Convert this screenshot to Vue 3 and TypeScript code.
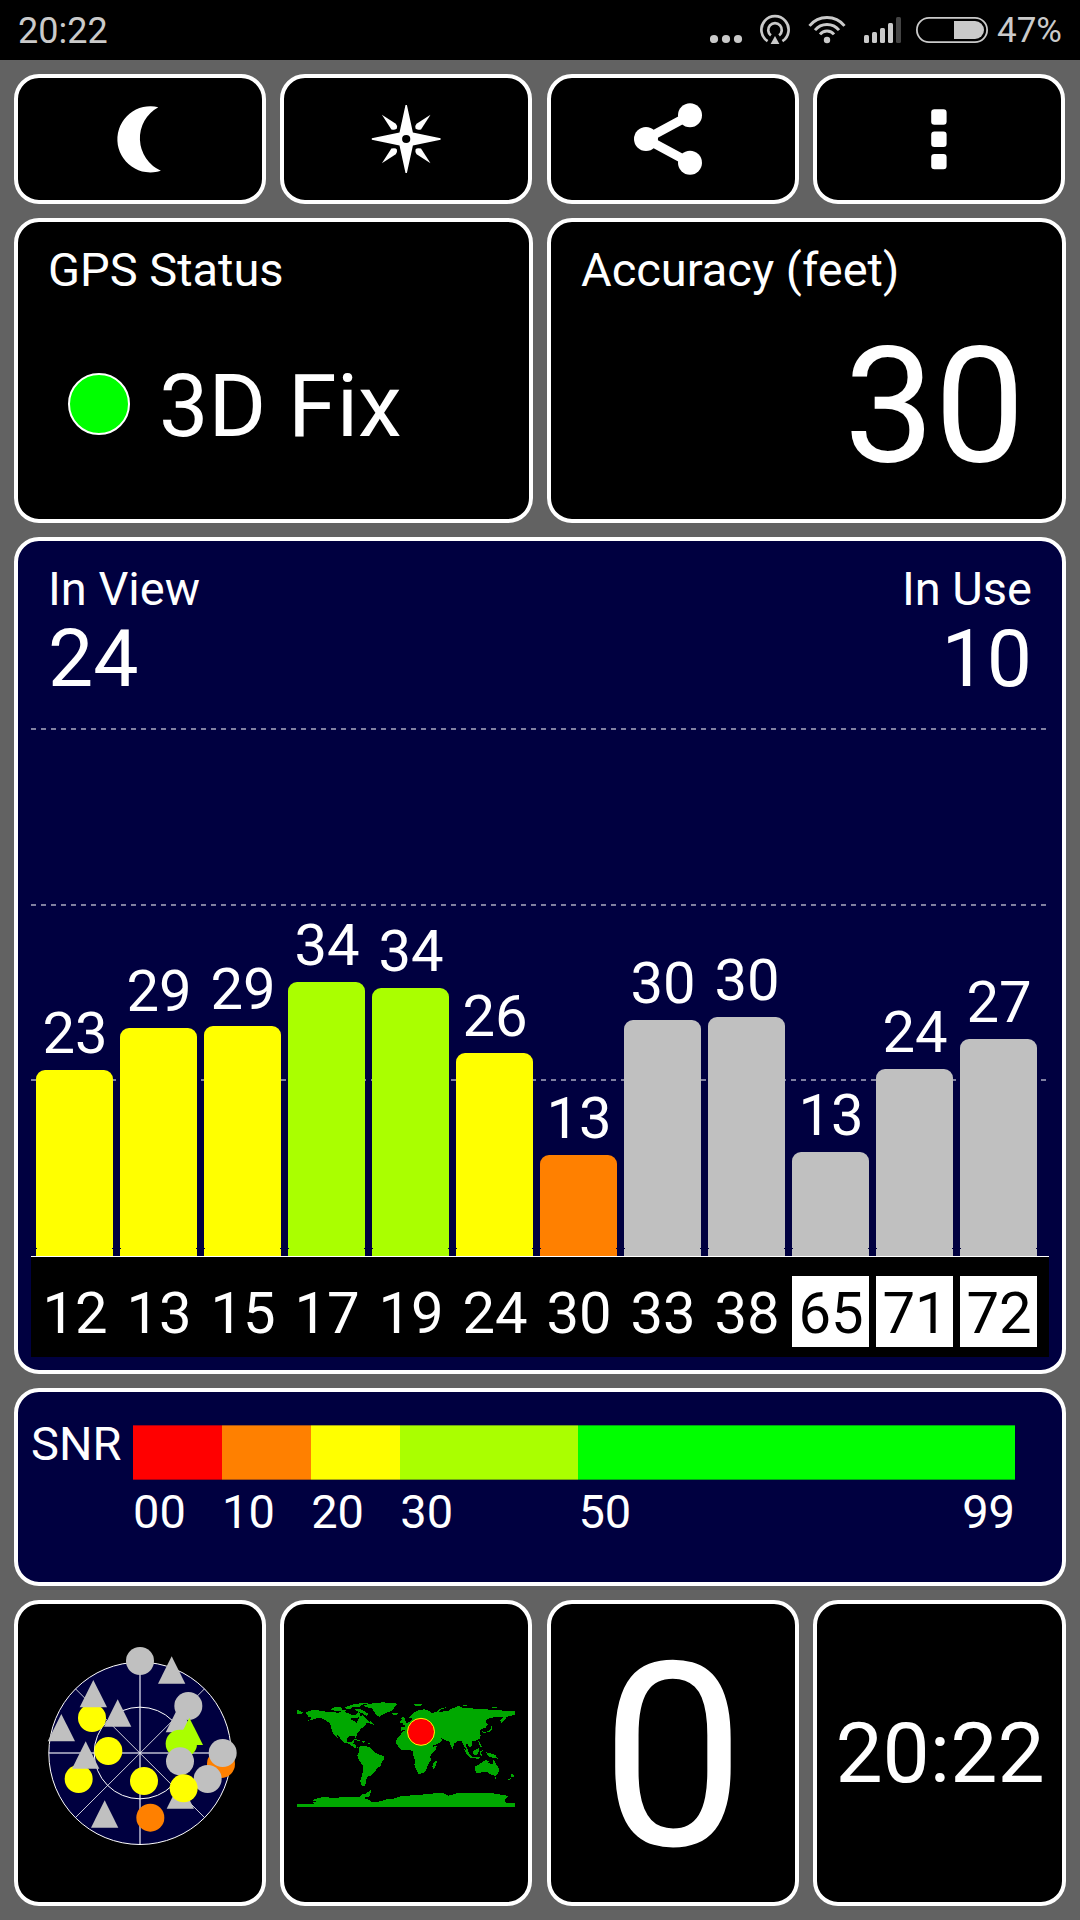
<script setup lang="ts">
interface Satellite {
  id: number
  snr: number
  height: number
  tone: string
  glonass?: boolean
}

const satellites: Satellite[] = [
  { id: 12, snr: 23, height: 186, tone: 'yellow' },
  { id: 13, snr: 29, height: 228, tone: 'yellow' },
  { id: 15, snr: 29, height: 230, tone: 'yellow' },
  { id: 17, snr: 34, height: 274, tone: 'lime' },
  { id: 19, snr: 34, height: 268, tone: 'lime' },
  { id: 24, snr: 26, height: 203, tone: 'yellow' },
  { id: 30, snr: 13, height: 101, tone: 'orange' },
  { id: 33, snr: 30, height: 236, tone: 'gray' },
  { id: 38, snr: 30, height: 239, tone: 'gray' },
  { id: 65, snr: 13, height: 104, tone: 'gray', glonass: true },
  { id: 71, snr: 24, height: 187, tone: 'gray', glonass: true },
  { id: 72, snr: 27, height: 217, tone: 'gray', glonass: true },
]

const scale = [
  { label: '00', tone: 'red' },
  { label: '10', tone: 'orange' },
  { label: '20', tone: 'yellow' },
  { label: '30', tone: 'lime' },
  { label: '50', tone: 'green' },
]

// Sky plot markers, listed in paint order. Triangles are given by their apex.
interface SkyMark {
  kind: 'c' | 't'
  x: number
  y: number
  fill: string
}

const GRAY = '#c0c0c0'
const YELLOW = '#ffff00'
const LIME = '#aaff00'
const ORANGE = '#ff8000'

const sky: SkyMark[] = [
  { kind: 'c', x: 186, y: 234, fill: YELLOW },
  { kind: 'c', x: 235, y: 333, fill: YELLOW },
  { kind: 'c', x: 146, y: 417, fill: YELLOW },
  { kind: 'c', x: 342, y: 423, fill: YELLOW },
  { kind: 'c', x: 361, y: 533, fill: ORANGE },
  { kind: 't', x: 425, y: 49, fill: GRAY },
  { kind: 't', x: 190, y: 120, fill: GRAY },
  { kind: 't', x: 263, y: 178, fill: GRAY },
  { kind: 't', x: 94, y: 222, fill: GRAY },
  { kind: 't', x: 167, y: 304, fill: GRAY },
  { kind: 't', x: 224, y: 481, fill: GRAY },
  { kind: 't', x: 451, y: 424, fill: GRAY },
  { kind: 't', x: 448, y: 195, fill: GRAY },
  { kind: 'c', x: 330, y: 63, fill: GRAY },
  { kind: 'c', x: 475, y: 198, fill: GRAY },
  { kind: 'c', x: 449, y: 311, fill: LIME },
  { kind: 'c', x: 459, y: 311, fill: LIME },
  { kind: 't', x: 478, y: 233, fill: LIME },
  { kind: 'c', x: 450, y: 364, fill: GRAY },
  { kind: 'c', x: 573, y: 372, fill: ORANGE },
  { kind: 'c', x: 578, y: 339, fill: GRAY },
  { kind: 'c', x: 533, y: 417, fill: GRAY },
  { kind: 'c', x: 461, y: 445, fill: YELLOW },
]

const triangle = (m: SkyMark): string =>
  `${m.x},${m.y} ${m.x + 41},${m.y + 82} ${m.x - 41},${m.y + 82}`
</script>

<template>
  <div class="screen">
    <header class="status">
      <span class="status-time">20:22</span>
      <svg class="status-icons" width="280" height="60" viewBox="710 0 280 60">
        <g fill="#cacaca">
          <circle cx="714" cy="39" r="4.1" />
          <circle cx="726" cy="39" r="4.1" />
          <circle cx="738" cy="39" r="4.1" />
          <path d="M775 36 L779.4 44 H770.6 Z" />
          <circle cx="827" cy="40" r="3.2" />
          <rect x="864" y="35" width="5" height="8" rx="1.5" />
          <rect x="872" y="32" width="5" height="11" rx="1.5" />
          <rect x="880" y="28" width="5" height="15" rx="1.5" />
          <rect x="888" y="23" width="5" height="20" rx="1.5" />
          <path d="M954 21 H975 A9 9 0 0 1 975 39 H954 Z" />
        </g>
        <rect x="896" y="17" width="5" height="26" rx="1.5" fill="#444" />
        <g fill="none" stroke="#cacaca">
          <path d="M767.6 41.2 A13.6 13.6 0 1 1 782.4 41.2" stroke-width="2.7" />
          <path d="M770.9 35.4 A6.8 6.8 0 1 1 779.1 35.4" stroke-width="2.7" />
          <path d="M809.5 25.8 A22.5 22.5 0 0 1 844.5 25.8" stroke-width="2.9" />
          <path d="M815 30.2 A15.5 15.5 0 0 1 839 30.2" stroke-width="2.9" />
          <path d="M820 34.4 A9 9 0 0 1 834 34.4" stroke-width="2.9" />
          <rect x="916.9" y="17.9" width="70.2" height="24.2" rx="12.1" stroke-width="1.8" />
        </g>
      </svg>
      <span class="status-battery">47%</span>
    </header>

    <main class="grid">
      <div class="row tools">
        <div class="pair">
          <button class="panel tool" aria-label="Night mode">
            <svg width="244" height="122" viewBox="18 78 244 122">
              <path d="M158.3 107.2 A33 33.1 0 1 0 160.9 170.7 A35.5 35.5 0 0 1 158.3 107.2 Z" fill="#fff" />
            </svg>
          </button>
          <button class="panel tool" aria-label="Compass">
            <svg width="244" height="122" viewBox="284 78 244 122">
              <g transform="translate(406.2 139)" fill="#fff">
                <path
                  fill-rule="evenodd"
                  d="M-.7 -34 H.7 L6.7 -6.4 L34.4 -.7 V.7 L6.7 6.4 L.7 34 H-.7 L-6.7 6.4 L-34.4 .7 V-.7 L-6.7 -6.4 Z M0 -4.1 A4.1 4.1 0 1 0 0 4.1 A4.1 4.1 0 1 0 0 -4.1 Z"
                />
                <g v-for="s in [[1, 1], [-1, 1], [1, -1], [-1, -1]]" :key="s.join()" :transform="`scale(${s[0]} ${s[1]})`">
                  <path d="M-24.3 -24.3 L-10.4 -15.2 Q-8.6 -13.6 -9.3 -10.4 Q-10.5 -8.7 -14.8 -9.6 Z" />
                </g>
              </g>
            </svg>
          </button>
        </div>
        <div class="pair">
          <button class="panel tool" aria-label="Share">
            <svg width="244" height="122" viewBox="551 78 244 122">
              <path d="M690 115.2 L646 139 L690 162.8" fill="none" stroke="#fff" stroke-width="9" />
              <circle cx="646" cy="139" r="12" fill="#fff" />
              <circle cx="690" cy="115.2" r="12" fill="#fff" />
              <circle cx="690" cy="162.8" r="12" fill="#fff" />
            </svg>
          </button>
          <button class="panel tool" aria-label="More options">
            <svg width="244" height="122" viewBox="817 78 244 122">
              <g fill="#fff">
                <rect x="931.2" y="109.3" width="15.4" height="15.4" rx="3.2" />
                <rect x="931.2" y="131.6" width="15.4" height="15.4" rx="3.2" />
                <rect x="931.2" y="153.9" width="15.4" height="15.4" rx="3.2" />
              </g>
            </svg>
          </button>
        </div>
      </div>

      <div class="row info">
        <section class="panel">
          <div class="title">GPS Status</div>
          <div class="fix"><i class="fix-dot"></i><span>3D Fix</span></div>
        </section>
        <section class="panel">
          <div class="title">Accuracy (feet)</div>
          <div class="accuracy">30</div>
        </section>
      </div>

      <section class="panel navy signal">
        <div class="counts">
          <div>
            <div class="label">In View</div>
            <div class="count">24</div>
          </div>
          <div class="right">
            <div class="label">In Use</div>
            <div class="count">10</div>
          </div>
        </div>
        <div class="plot">
          <i class="gridline g1"></i>
          <i class="gridline g2"></i>
          <i class="gridline g3"></i>
          <div v-for="s in satellites" :key="s.id" class="col">
            <span class="snr">{{ s.snr }}</span>
            <div class="bar" :class="s.tone" :style="{ height: s.height + 'px' }"></div>
          </div>
        </div>
        <div class="ids">
          <span v-for="s in satellites" :key="s.id" class="id" :class="{ inverse: s.glonass }">{{ s.id }}</span>
        </div>
      </section>

      <section class="panel navy legend">
        <span class="legend-name">SNR</span>
        <div class="scale">
          <div class="segments">
            <i v-for="s in scale" :key="s.label" :class="s.tone"></i>
          </div>
          <div class="ticks">
            <span v-for="s in scale.slice(0, 4)" :key="s.label">{{ s.label }}</span>
            <span class="last"><b>50</b><b>99</b></span>
          </div>
        </div>
      </section>

      <div class="row bottom">
        <div class="pair">
          <section class="panel center">
            <svg width="220" height="220" viewBox="0 9 660 660">
              <circle cx="330" cy="340" r="273.5" fill="#000040" />
              <g stroke="#8c8cac" stroke-width="6">
                <path d="M330 66 V614 M56 339 H604" />
              </g>
              <g fill="none" stroke="#fff" stroke-width="3">
                <path d="M136 146 L524 533 M524 146 L136 533" stroke-width="2.4" />
                <circle cx="330" cy="340" r="273.5" />
                <circle cx="330" cy="339" r="137.5" />
              </g>
              <template v-for="(m, i) in sky" :key="i">
                <circle v-if="m.kind === 'c'" :cx="m.x" :cy="m.y" r="42" :fill="m.fill" />
                <polygon v-else :points="triangle(m)" :fill="m.fill" />
              </template>
            </svg>
          </section>
          <section class="panel center">
            <svg width="240" height="130" viewBox="3 -6 720 390">
              <g fill="#00a800" shape-rendering="crispEdges">
                <!-- North and Central America -->
                <path d="M63 68 L72 62 L96 60 L114 64 L135 66 L160 68 L175 65 L192 70 L203 76 L213 74 L219 66 L225 72 L225 80 L214 84 L204 83 L196 86 L201 91 L210 93 L214 99 L219 92 L222 80 L232 76 L238 80 L246 90 L254 95 L262 98 L267 104 L256 101 L250 98 L243 100 L241 106 L232 113 L225 118 L224 124 L215 133 L214 146 L208 138 L195 138 L186 144 L187 155 L199 157 L203 151 L209 152 L205 161 L211 165 L214 173 L221 172 L213 176 L200 167 L188 160 L176 157 L168 148 L160 138 L154 132 L160 147 L148 135 L140 122 L138 106 L131 97 L120 90 L108 84 L95 84 L82 90 L68 92 L82 84 L70 80 L67 75 Z" />
                <path d="M36 58 L45 64 L54 67 L52 71 L36 71 Z M135 58 L150 51 L168 52 L172 60 L184 59 L180 66 L150 62 Z M180 52 L200 44 L230 39 L252 40 L232 44 L222 51 L204 50 L196 56 L184 57 Z M207 56 L226 57 L240 64 L250 72 L246 79 L232 70 L215 63 Z M254 92 L262 96 L264 103 L256 99 Z" />
                <path d="M237 46 L262 40 L294 37 L320 39 L338 41 L328 50 L326 58 L316 64 L300 70 L290 75 L284 80 L275 76 L268 66 L262 56 L240 50 Z M320 70 L336 68 L340 72 L328 76 Z" />
                <path d="M205 147 L220 149 L228 153 L222 155 L212 150 Z M230 153 L242 155 L236 158 Z M248 158 L254 160 L252 165 Z" />
                <!-- South America -->
                <path d="M221 172 L232 167 L250 170 L262 178 L268 187 L280 192 L298 200 L298 207 L290 215 L288 228 L276 235 L270 245 L262 252 L255 258 L248 260 L243 268 L242 280 L240 288 L228 286 L226 272 L230 260 L234 245 L235 228 L228 220 L221 207 L217 195 L222 185 Z" />
                <!-- Africa -->
                <path d="M345 138 L350 128 L360 121 L372 121 L440 130 L437 150 L445 170 L456 168 L452 180 L442 190 L436 198 L437 212 L428 225 L424 240 L415 250 L400 251 L395 240 L388 225 L390 210 L385 195 L384 184 L375 180 L352 181 L340 170 L333 160 L335 148 Z M444 219 L452 212 L456 216 L450 232 L445 236 L442 230 Z" />
                <!-- Europe and Asia -->
                <path d="M348 122 L347 110 L361 110 L357 101 L368 98 L378 92 L384 86 L372 84 L380 76 L390 66 L402 60 L418 58 L432 63 L440 68 L455 67 L470 65 L490 62 L500 56 L520 48 L535 54 L560 54 L570 58 L590 56 L620 60 L640 60 L665 63 L690 64 L690 74 L680 77 L666 80 L660 90 L649 98 L646 92 L655 82 L640 80 L620 83 L606 88 L601 96 L608 104 L602 113 L594 116 L584 121 L587 138 L584 146 L570 153 L560 155 L562 166 L555 173 L550 168 L546 160 L542 166 L550 184 L544 180 L536 165 L530 152 L520 152 L508 160 L505 170 L502 177 L497 166 L494 155 L480 151 L466 143 L472 150 L460 161 L442 167 L434 150 L428 140 L430 130 L400 130 L380 118 L362 120 Z" />
                <path d="M345 93 L351 89 L346 84 L358 81 L362 95 L367 103 L354 105 L356 98 L345 98 Z M386 43 L412 43 L406 48 L390 47 Z M455 64 L465 56 L486 51 L470 58 L462 66 Z M529 43 L548 47 L540 50 Z M592 124 L604 126 L616 119 L620 108 L623 118 L612 126 L596 129 Z M614 50 L636 52 L630 55 Z" />
                <!-- South-east Asia and Oceania -->
                <path d="M537 177 L546 182 L556 194 L560 200 L584 202 L582 207 L556 203 L546 194 Z M562 185 L575 178 L582 172 L580 190 L574 196 L564 193 Z M584 184 L596 180 L588 186 L592 198 L585 196 Z M602 186 L616 190 L630 194 L638 206 L626 204 L612 200 Z M580 152 L587 162 L592 172 L586 170 L581 160 Z" />
                <path d="M570 230 L582 224 L592 216 L602 211 L612 212 L610 218 L622 223 L626 209 L634 224 L642 236 L640 250 L630 258 L618 254 L606 245 L592 247 L574 250 L571 242 Z M628 261 L635 261 L631 267 Z M678 250 L688 256 L684 262 L679 260 Z M679 262 L672 272 L667 270 Z" />
                <!-- Antarctica -->
                <path d="M36 342 L88 342 L84 338 L96 334 L80 331 L94 326 L110 322 L150 323 L200 321 L225 322 L228 314 L244 310 L257 300 L256 318 L236 324 L252 330 L262 336 L290 334 L300 329 L330 325 L350 318 L400 315 L440 311 L470 308 L490 317 L520 309 L560 310 L590 308 L625 310 L655 315 L672 318 L658 330 L664 339 L690 339 L690 350 L36 350 Z" />
              </g>
              <circle cx="408" cy="125.5" r="40.5" fill="#f00" stroke="#ff0" stroke-width="3" />
            </svg>
          </section>
        </div>
        <div class="pair">
          <section class="panel center"><span class="speed">0</span></section>
          <section class="panel center wide"><span class="clock">20:22</span></section>
        </div>
      </div>
    </main>
  </div>
</template>

<style>
body {
  margin: 0;
  background: #626262;
}
</style>

<style scoped>
.screen {
  width: 1080px;
  height: 1920px;
  background: #626262;
  color: #fff;
  font-family: Roboto, "Liberation Sans", sans-serif;
  display: flex;
  flex-direction: column;
  overflow: hidden;
}
.status {
  height: 60px;
  flex: none;
  box-sizing: border-box;
  background: #000;
  color: #cacaca;
  display: flex;
  align-items: center;
  padding: 0 17px 0 18px;
  font-size: 35px;
  line-height: 60px;
}
.status-time,
.status-battery {
  padding-top: 2px;
}
.status-time {
  font-size: 36px;
}
.status-icons {
  margin-left: auto;
}
.status-battery {
  margin-left: 7px;
  width: 66px;
}
.grid {
  display: flex;
  flex-direction: column;
  gap: 14px;
  padding: 14px;
}
.row {
  display: flex;
  gap: 14px;
}
.row > * {
  width: 519px;
  box-sizing: border-box;
}
.pair {
  display: flex;
  gap: 14px;
}
.pair > .panel {
  width: 252px;
}
.pair > .wide {
  width: 253px;
}
.panel {
  box-sizing: border-box;
  border: 4px solid #fff;
  border-radius: 25px;
  background: #000;
}
.navy {
  background: #000040;
  width: 1052px;
}
.tool {
  height: 130px;
  padding: 0;
  margin: 0;
}
.tool svg {
  display: block;
}
.info > .panel {
  height: 305px;
  padding: 20px 30px 0;
}
.title,
.label {
  font-size: 47px;
  line-height: 55px;
  height: 56px;
  white-space: nowrap;
}
.fix {
  display: flex;
  align-items: center;
  margin-top: 56px;
  font-size: 88px;
  line-height: 104px;
}
.fix-dot {
  box-sizing: border-box;
  width: 62px;
  height: 62px;
  border: 2px solid #fff;
  border-radius: 50%;
  background: #0f0;
  margin: 0 29px 4px 20px;
}
.accuracy {
  margin-top: 27px;
  padding-right: 7px;
  text-align: right;
  font-size: 161px;
  line-height: 162px;
}
.signal {
  height: 837px;
  padding: 20px 13px 0;
}
.counts {
  display: flex;
  justify-content: space-between;
  padding: 0 17px;
}
.count {
  margin-top: 2px;
  font-size: 80.5px;
  line-height: 80px;
}
.right {
  text-align: right;
}
.plot {
  position: relative;
  display: flex;
  gap: 7px;
  align-items: flex-end;
  height: 528px;
  margin-top: 29px;
  padding-left: 5px;
  border-bottom: 1px solid #fff;
}
.gridline {
  position: absolute;
  left: 0;
  right: 0;
  height: 2px;
  background: repeating-linear-gradient(90deg, #8080a0 0 5px, transparent 5px 10px);
}
.g1 {
  top: 0;
}
.g2 {
  top: 176px;
}
.g3 {
  top: 351px;
}
.col {
  position: relative;
  width: 77px;
  display: flex;
  flex-direction: column;
  align-items: center;
}
.snr {
  font-size: 58px;
  line-height: 60px;
  margin-bottom: 7px;
  padding-left: 1px;
}
.bar {
  position: relative;
  width: 77px;
  border-radius: 9px 9px 0 0;
}
.bar::before,
.bar::after {
  content: "";
  position: absolute;
  bottom: 7px;
  width: 1px;
  height: 1px;
  background: #000040;
}
.bar::before {
  left: 0;
}
.bar::after {
  right: 0;
}
.red {
  background: #f00;
}
.orange {
  background: #ff8000;
}
.yellow {
  background: #ff0;
}
.lime {
  background: #af0;
}
.green {
  background: #0f0;
}
.gray {
  background: #c0c0c0;
}
.ids {
  display: flex;
  gap: 7px;
  height: 100px;
  box-sizing: border-box;
  padding: 19px 0 0 5px;
  background: #000;
}
.id {
  box-sizing: border-box;
  width: 77px;
  height: 71px;
  padding-left: 1px;
  text-align: center;
  font-size: 58px;
  line-height: 74px;
}
.inverse {
  background: #fff;
  color: #000;
}
.legend {
  height: 198px;
  display: flex;
  padding: 24px 47px 0 13px;
}
.legend-name {
  width: 102px;
  font-size: 47px;
  line-height: 56px;
}
.scale {
  flex: 1;
  padding-top: 9px;
}
.segments,
.ticks {
  display: grid;
  grid-template-columns: 10fr 10fr 10fr 20fr 49fr;
}
.segments i {
  height: 55px;
  box-shadow: inset 0 1px rgba(0, 0, 64, 0.35), inset 0 -1px rgba(0, 0, 64, 0.35);
}
.ticks {
  margin-top: 4px;
  font-size: 47px;
  line-height: 55px;
}
.last {
  display: flex;
  justify-content: space-between;
}
.last b {
  font-weight: 400;
}
.bottom .panel {
  height: 306px;
}
.center {
  display: flex;
  align-items: center;
  justify-content: center;
}
.speed {
  font-size: 257px;
  line-height: 290px;
  padding-top: 9px;
}
.clock {
  font-size: 84px;
  line-height: 100px;
  padding: 2px 0 0 1px;
}
</style>
